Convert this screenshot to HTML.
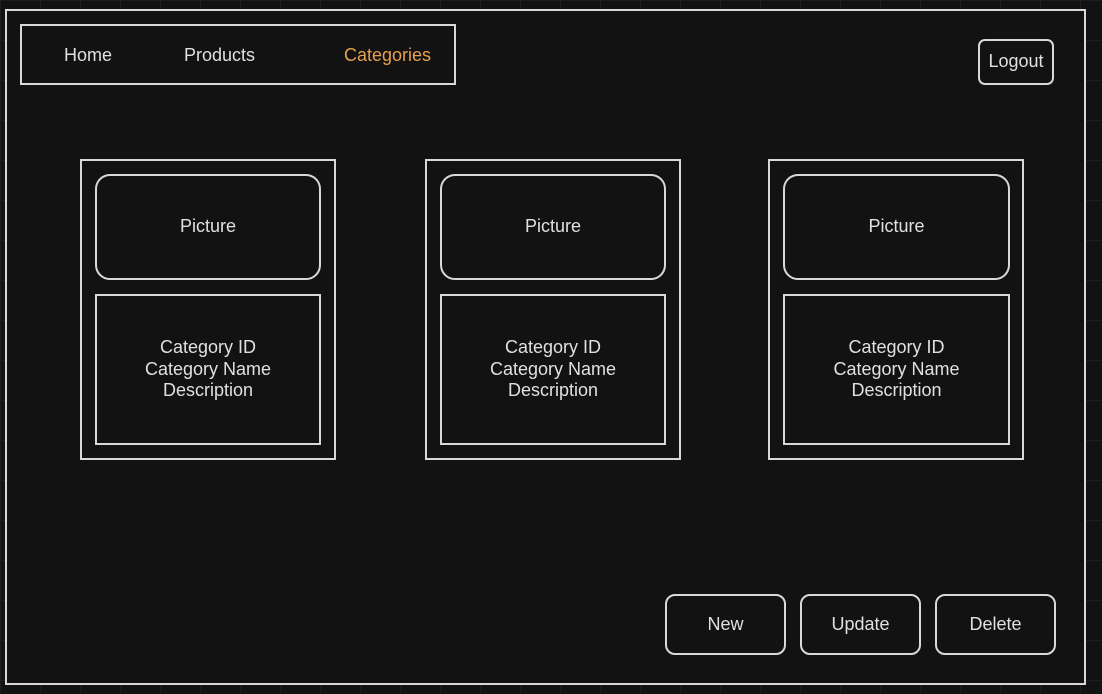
<!DOCTYPE html>
<html><head><style>
html,body{margin:0;padding:0;}
body{width:1102px;height:694px;background-color:#121212;
background-image:linear-gradient(#1e1e1e 1px,transparent 1px),linear-gradient(90deg,#1e1e1e 1px,transparent 1px);
background-size:40px 40px;position:relative;overflow:hidden;
font-family:"Liberation Sans",sans-serif;color:#e0e0e0;font-size:18px;}
.b{position:absolute;box-sizing:border-box;border:2px solid #d8d8d8;background:#121212;display:flex;align-items:center;justify-content:center;text-align:center;line-height:21.5px;}
.t{position:absolute;}
</style></head><body>
<div class="b" style="left:5px;top:9px;width:1081px;height:676px;"></div>
<div class="b" style="left:20px;top:24px;width:436px;height:61px;"></div>
<div class="t" style="left:64px;top:45px;">Home</div>
<div class="t" style="left:184px;top:45px;">Products</div>
<div class="t" style="left:344px;top:45px;color:#e6a04f;">Categories</div>
<div class="b" style="left:978px;top:39px;width:76px;height:46px;border-radius:7px;">Logout</div>

<div class="b" style="left:80px;top:159px;width:256px;height:301px;"></div>
<div class="b" style="left:95px;top:174px;width:226px;height:106px;border-radius:15px;">Picture</div>
<div class="b" style="left:95px;top:294px;width:226px;height:151px;">Category ID<br>Category Name<br>Description</div>

<div class="b" style="left:425px;top:159px;width:256px;height:301px;"></div>
<div class="b" style="left:440px;top:174px;width:226px;height:106px;border-radius:15px;">Picture</div>
<div class="b" style="left:440px;top:294px;width:226px;height:151px;">Category ID<br>Category Name<br>Description</div>

<div class="b" style="left:768px;top:159px;width:256px;height:301px;"></div>
<div class="b" style="left:783px;top:174px;width:227px;height:106px;border-radius:15px;">Picture</div>
<div class="b" style="left:783px;top:294px;width:227px;height:151px;">Category ID<br>Category Name<br>Description</div>

<div class="b" style="left:665px;top:594px;width:121px;height:61px;border-radius:10px;">New</div>
<div class="b" style="left:800px;top:594px;width:121px;height:61px;border-radius:10px;">Update</div>
<div class="b" style="left:935px;top:594px;width:121px;height:61px;border-radius:10px;">Delete</div>
</body></html>
